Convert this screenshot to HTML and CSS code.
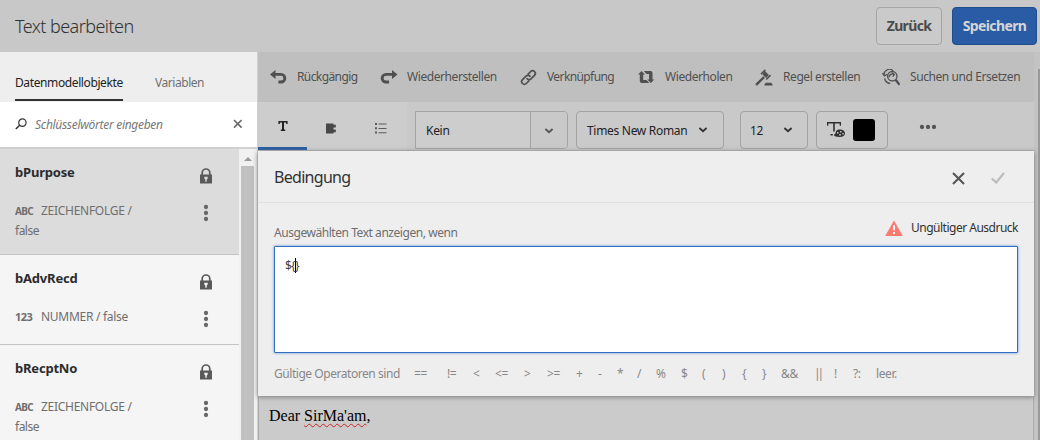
FILE: index.html
```html
<!DOCTYPE html>
<html lang="de">
<head>
<meta charset="utf-8">
<title>Text bearbeiten</title>
<link rel="stylesheet" href="styles.css">
</head>
<body>
<svg class="defs" width="0" height="0">
  <symbol id="lock" viewBox="0 0 12 16"><path d="M2.200 7V4.800a3.800 3.800 0 0 1 7.600 0V7" fill="none" stroke="currentColor" stroke-width="1.700"/><path fill="currentColor" fill-rule="evenodd" d="M0 6.600h12V15.500H0zM4.300 8.800v1.700l1 1v2.200h1.400v-2.200l1-1V8.800z"/></symbol>
  <symbol id="dots" viewBox="0 0 6 18"><circle cx="3" cy="3" r="2.150"/><circle cx="3" cy="9" r="2.150"/><circle cx="3" cy="15" r="2.150"/></symbol>
  <symbol id="chevron" viewBox="0 0 10 6"><path d="M1.400 1L5 4.200 8.600 1" fill="none" stroke="currentColor" stroke-width="1.800"/></symbol>
</svg>
<header class="header">
  <h1 class="title">Text bearbeiten</h1>
  <button class="btn back"><span>Zurück</span></button>
  <button class="btn save"><span>Speichern</span></button>
</header>
<div class="body">
  <aside class="side">
    <nav class="tabs"><a class="tab active">Datenmodellobjekte</a><a class="tab">Variablen</a></nav>
    <div class="search">
      <svg class="lens" width="12" height="12" viewBox="0 0 12 12" fill="none" stroke="#333"><circle cx="7.400" cy="4.600" r="3.700" stroke-width="1.200"/><path d="M4.700 7.300L.8 11" stroke-width="1.500"/></svg>
      <span class="hint">Schlüsselwörter eingeben</span>
      <svg width="10" height="10" viewBox="0 0 10 10" stroke="#686868" stroke-width="1.600"><path d="M1 1l7.600 7.600M8.600 1L1 8.600"/></svg>
    </div>
    <div class="listwrap">
      <div class="list">
        <div class="item selected">
          <div class="name">bPurpose</div><svg class="lock"><use href="#lock"/></svg>
          <div class="meta"><b class="abc">ABC</b><span class="type">ZEICHENFOLGE /</span><br><span class="false">false</span></div><svg class="dots"><use href="#dots"/></svg>
        </div>
        <div class="item short">
          <div class="name">bAdvRecd</div><svg class="lock"><use href="#lock"/></svg>
          <div class="meta"><b class="num">123</b><span class="type">NUMMER / false</span></div><svg class="dots"><use href="#dots"/></svg>
        </div>
        <div class="item">
          <div class="name">bRecptNo</div><svg class="lock"><use href="#lock"/></svg>
          <div class="meta"><b class="abc">ABC</b><span class="type">ZEICHENFOLGE /</span><br><span class="false">false</span></div><svg class="dots"><use href="#dots"/></svg>
        </div>
      </div>
      <div class="scroll"><i class="arrow"></i><i class="thumb"></i></div>
    </div>
  </aside>
  <main class="main">
    <div class="tools">
      <div class="tool tight"><svg viewBox="0 0 18 18"><path d="M0 5.500L5.500 1v3H11a5.200 5.200 0 0 1 0 10.600H8.400v-3H11a2.400 2.400 0 0 0 0-4.800H5.500V10z"/></svg><span>Rückgängig</span></div>
      <div class="tool"><svg viewBox="0 0 18 18"><path d="M17.500 5.500L12 1v3H6a5.200 5.200 0 0 0 0 10.600h3.100v-3H6a2.400 2.400 0 0 1 0-4.800h6V10z"/></svg><span>Wiederherstellen</span></div>
      <div class="tool tight"><svg viewBox="0 0 18 18" fill="none" stroke="currentColor" stroke-width="1.700"><g transform="rotate(-45 8.500 8.500)"><path d="M7 11.200H2.700a2.700 2.700 0 0 1 0-5.400h5a2.700 2.700 0 0 1 2.600 3.500"/><path d="M10 5.800h4.300a2.700 2.700 0 0 1 0 5.400h-5a2.700 2.700 0 0 1-2.600-3.500"/></g></svg><span>Verknüpfung</span></div>
      <div class="tool"><svg viewBox="0 0 18 18"><path d="M0 5.500L3.500 2 7 5.500H5.200V11h3.300l2.700 3H3.800a2 2 0 0 1-2-2V5.500zM5.800 2h6.700a2 2 0 0 1 2 2v6.500H16.300L12.800 14 9.300 10.500h1.800V5H8.500z"/></svg><span>Wiederholen</span></div>
      <div class="tool rule"><svg viewBox="0 0 18 18"><path d="M5.500 4.500L9.800.3l1.100 1.100-4.300 4.300zM10.700 9.900l4.300-4.300 1.100 1.100-4.300 4.300zM7.300 5.200L10.200 2.300l3.700 3.700-2.900 2.900zM8.300 7.300l1.600 1.600L2 16.800.2 15.100zM9.500 16.600v-1.300l1.400-1.500h5.300l1.300 1.500v1.300z"/></svg><span>Regel erstellen</span></div>
      <div class="tool find"><svg viewBox="0 0 18 18" fill="none" stroke="currentColor" stroke-width="1.300"><circle cx="10.300" cy="7.200" r="4.700"/><path d="M13.600 10.700l4 5.200" stroke-width="2.300"/><path d="M2.300 6.700A5.200 5.200 0 0 1 11 1.800M.4 4.300l2 2.700 2.800-1.700M2.600 9.500a6.500 6.500 0 0 0 5.500 5M7 8.200a3.500 3.500 0 0 1 5-2.900M10 3.700l2.400 1.600-1.600 2.300"/></svg><span>Suchen und Ersetzen</span></div>
    </div>
    <div class="format">
      <div class="modes">
        <div class="mode on"><svg width="10" height="10" viewBox="0 0 10 10" fill="#222"><path d="M.4 0h9.200v3H8.300l-.4-1.500H6v7h1.200V10H2.800V8.500H4v-7H2.100L1.700 3H.4z"/></svg></div>
        <div class="mode"><svg width="11" height="11" viewBox="0 0 11 11" fill="#484848"><path d="M0 .5h7.500v1.300h2.300v2.600H7.500v2.200h2.300v2.600H7.500v1.300H0z"/></svg></div>
        <div class="mode"><svg width="12" height="11" viewBox="0 0 12 11" fill="#5c5c5c"><path d="M0 0h2v2H0zM0 4.300h2v2H0zM0 8.600h2v2H0zM3.500 .6h8v1h-8zM3.500 4.900h8v1h-8zM3.500 9.200h8v1h-8z"/></svg></div>
      </div>
      <div class="box combo"><span class="kein">Kein</span><span class="drop"><svg class="chev soft"><use href="#chevron"/></svg></span></div>
      <div class="box font"><span>Times New Roman</span><svg class="chev"><use href="#chevron"/></svg></div>
      <div class="box size"><span>12</span><svg class="chev"><use href="#chevron"/></svg></div>
      <div class="box color"><svg width="19" height="18" viewBox="0 0 19 18" fill="#303030"><path d="M0 1h14v3.700h-1.300V2.600H7.800v8H6.200v-8H1.300v2.100H0zM3.500 13h2.300v1.500H3.500z"/><path fill-rule="evenodd" d="M12.500 8.500c3 0 5.500 1.500 5.500 3.700s-2 3.800-5.500 3.800c-3.200 0-5.500-.8-5.500-2 0-1 1.500-.7 1.500-1.700 0-2.200 1.500-3.800 4-3.800zM10 11v1.500h1.500V11zm3-1v1.500h1.500V10zm2.300 2v1.400h1.400V12zm-3.300 1.200v1.400h2v-1.400z"/></svg><i class="swatch"></i></div>
      <svg class="more" width="18" height="6" viewBox="0 0 18 6" fill="#555"><circle cx="3" cy="3" r="2.150"/><circle cx="9" cy="3" r="2.150"/><circle cx="15" cy="3" r="2.150"/></svg>
    </div>
    <section class="dialog">
      <div class="dhead"><h2 class="dtitle">Bedingung</h2>
        <svg width="13" height="13" viewBox="0 0 13 13" stroke="#555" stroke-width="2.100"><path d="M1 1l11 11M12 1L1 12"/></svg>
        <svg width="14" height="12" viewBox="0 0 14 12" fill="none" stroke="#bcbcbc" stroke-width="2.200"><path d="M.8 6.500l4.400 4L13 1"/></svg>
      </div>
      <div class="labels"><label class="label">Ausgewählten Text anzeigen, wenn</label>
        <svg width="18" height="17" viewBox="0 0 18 17"><path d="M9 .4L17.800 16H.2z" fill="#fb7a70"/><path d="M8 5.300h2v5H8zM8 12h2v2H8z" fill="#fff"/></svg>
        <span class="error">Ungültiger Ausdruck</span></div>
      <div class="expr"><span>$</span><span>{</span><i class="caret"></i><span>}</span></div>
      <div class="ops"><span class="oplabel">Gültige Operatoren sind</span><span>==</span><span>!=</span><span>&lt;</span><span>&lt;=</span><span>&gt;</span><span>&gt;=</span><span>+</span><span>-</span><span>*</span><span>/</span><span>%</span><span>$</span><span>(</span><span>)</span><span>{</span><span>}</span><span>&amp;&amp;</span><span class="or">||</span><span>!</span><span>?:</span><span>leer.</span></div>
    </section>
    <div class="doc">Dear <span class="typo">SirMa'am</span>,</div>
  </main>
  <div class="pagescroll"></div>
</div>
</body>
</html>
```

FILE: styles.css
```css
* { box-sizing: border-box; }
body { margin: 0; width: 1040px; height: 440px; overflow: hidden; background: #c8c8c8; font: 12px/20px "Noto Sans", sans-serif; color: #323232; white-space: nowrap; }
h1, h2 { margin: 0; font-weight: 300; }
svg { display: block; flex: none; }
.defs { position: absolute; }
.header { height: 52px; display: flex; align-items: center; padding: 0 3px 0 15px; }
.title { font-size: 18px; letter-spacing: -.55px; flex: 1; }
.btn { height: 38px; padding: 0; border: 1px solid #a5a5a5; border-radius: 4px; background: #cacaca; color: #4b4b4b; font: bold 14px/20px "Noto Sans", sans-serif; letter-spacing: -.65px; }
.back { width: 66px; margin-right: 10px; }
.save { width: 85px; background: #295ca4; border-color: #204d8d; color: #d5d5d5; letter-spacing: -.6px; }
.body { height: 388px; display: flex; }
.side { width: 258px; flex: none; border-right: 1px solid #cfcfcf; background: #fff; }
.tabs { height: 50px; padding-left: 15px; background: #eee; display: flex; gap: 32px; color: #707070; }
.tab { height: 49px; padding-top: 21px; letter-spacing: -.45px; }
.tab.active { width: 108px; color: #222; border-bottom: 2px solid #323232; letter-spacing: -.39px; }
.search { height: 47px; display: flex; align-items: center; padding: 0 14px 2px 15px; border-bottom: 2px solid #d0d0d0; }
.hint { flex: 1; margin: 2px 0 0 8px; font-style: italic; color: #777; letter-spacing: -.3px; }
.listwrap { height: 291px; display: flex; overflow: hidden; }
.list { width: 239px; flex: none; background: #f5f5f5; }
.item { height: 106px; padding: 13px 27px 0 15px; border-bottom: 1px solid #c4c4c4; display: grid; grid-template-columns: 1fr 12px; grid-template-rows: 39px 40px; }
.item.short { height: 90px; }
.selected { background: #dcdcdc; }
.name { font-weight: bold; font-size: 13px; letter-spacing: -.2px; color: #2c2c2c; }
.lock { width: 12px; height: 16px; margin-top: 6px; color: #5a5a5a; }
.dots { width: 6px; height: 18px; margin: 3px 0 0 3px; fill: #686868; }
.meta { color: #6e6e6e; }
.meta b { display: inline-block; width: 26px; font-size: 10px; letter-spacing: -.6px; }
.meta .num { font-size: 11px; letter-spacing: -.5px; }
.type { letter-spacing: -.28px; }
.false { letter-spacing: -.5px; }
.scroll { width: 18px; background: #f1f1f1; padding: 8px 3px 0 2px; }
.arrow { display: block; width: 0; margin: 0 auto; border: 4px solid transparent; border-top: 0; border-bottom-color: #999; }
.thumb { display: block; height: 280px; margin-top: 5px; background: #c0c0c0; }
.main { width: 776px; display: flex; flex-direction: column; }
.tools { height: 50px; background: #bfbfbf; padding-left: 12px; display: grid; grid-template-columns: 110px 140px 118px 117px 127px 1fr; align-items: center; color: #505050; }
.tool { display: flex; align-items: center; gap: 9px; letter-spacing: -.42px; }
.tool.tight { letter-spacing: -.6px; }
.tool.find { gap: 10px; }
.tool.rule { gap: 10px; }
.tool svg { width: 18px; height: 18px; fill: currentColor; margin-top: 2px; }
.tool svg[fill="none"] { fill: none; }
.format { height: 49px; display: flex; align-items: center; background: #c9c9c9; border-bottom: 1px solid #b8b8b8; }
.modes { display: flex; width: 149px; height: 48px; background: #cdcdcd; margin-right: 8px; }
.mode { width: 49px; display: flex; align-items: center; justify-content: center; padding-top: 4px; }
.mode.on { border-bottom: 3px solid #295ca4; padding: 2px 0 0; }
.box { height: 38px; border: 1px solid #a3a3a3; border-radius: 4px; background: #cacaca; display: flex; align-items: center; justify-content: space-between; color: #222; letter-spacing: -.3px; margin-top: 9px; align-self: flex-start; }
.box span { padding-top: 1px; }
.chev { width: 10px; height: 6px; color: #333; }
.chev.soft { color: #555; }
.combo { width: 153px; margin-right: 8px; border-radius: 0 4px 4px 0; padding-left: 10px; background: #cdcdcd; }
.combo .drop { width: 37px; height: 36px; border-left: 1px solid #a3a3a3; border-radius: 0 3px 3px 0; background: #c9c9c9; display: flex; align-items: center; justify-content: center; }
.font { width: 148px; margin-right: 16px; padding: 0 15px 0 10px; }
.size { width: 68px; margin-right: 8px; padding: 0 14px 0 9px; }
.color { width: 72px; padding: 0 12px 0 10px; }
.swatch { width: 22px; height: 22px; background: #000; border-radius: 3px; }
.more { margin-left: 31px; margin-top: 2px; }
.dialog { height: 245px; background: #eee; position: relative; box-shadow: 0 1px 5px #777; }
.dhead { height: 52px; display: flex; align-items: center; padding: 3px 29px 0 16px; border-bottom: 1px solid #e0e0e0; gap: 26px; }
.dtitle { flex: 1; font-size: 16px; letter-spacing: -.7px; font-weight: 400; margin-top: -3px; }
.labels { height: 43px; display: flex; align-items: center; padding: 7px 16px 0; }
.label { flex: 1; color: #6e6e6e; letter-spacing: -.45px; padding-top: 9px; }
.error { margin-left: 8px; width: 107px; letter-spacing: -.5px; }
.expr { height: 107px; margin: 0 16px; padding: 9px 10px; background: #fff; border: 1px solid #326dbe; box-shadow: 0 0 3px #5b94e0; display: flex; color: #444; border-radius: 1px; }
.expr span { width: 6px; }
.expr .caret { width: 1px; height: 15px; margin: 2px -1px 0 -2px; background: #000; }
.ops { display: grid; padding: 11px 0 0 16px; color: #888; letter-spacing: -.4px; grid-template-columns: 140px 33px 26px 22px 29px 23px 29px 22px 19px 20px 19px 25px 21px 20px 20px 20px 19px 33px 20px 19px 23px 1fr; }
.oplabel { letter-spacing: -.45px; }
.or { letter-spacing: -3px; }
.doc { flex: 1; background: #cbcbcb; border: 1px solid #aaa; border-width: 0 1px; padding: 10px 10px; font: 16px/20px "Liberation Serif", serif; color: #000; }
.typo { text-decoration: underline wavy #cf2525 1px; text-underline-offset: 2px; }
.pagescroll { width: 6px; background: linear-gradient(#999, #999) 4px 17px / 2px 371px no-repeat #c3c3c3; }
```
